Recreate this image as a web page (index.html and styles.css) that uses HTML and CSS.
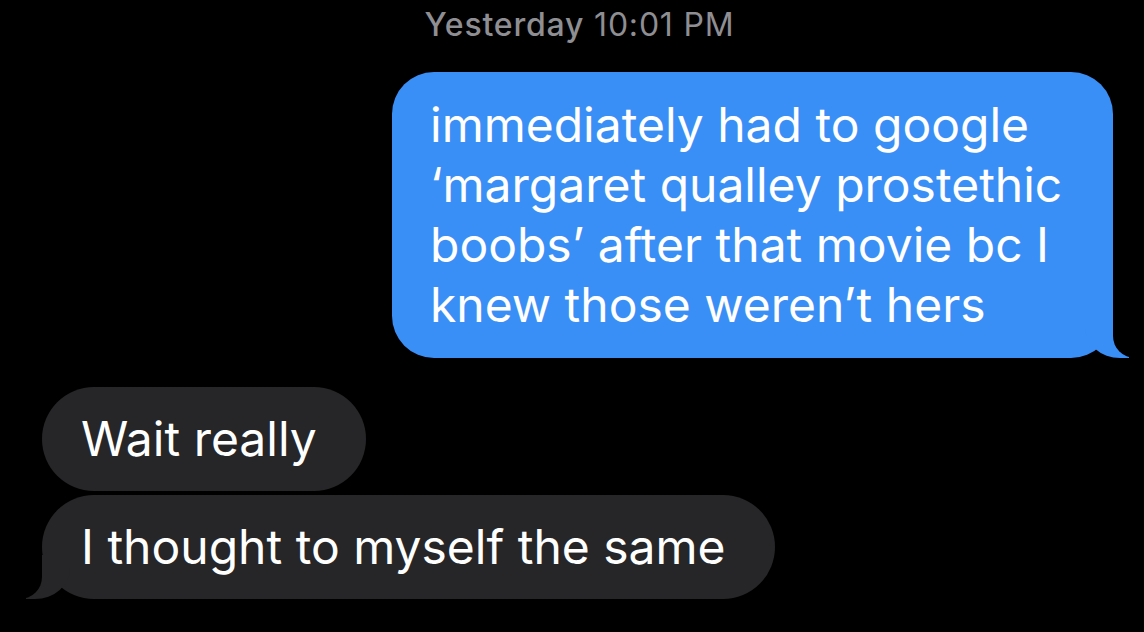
FILE: index.html
```html
<!DOCTYPE html>
<html lang="en">
<head>
<meta charset="utf-8">
<title>Messages</title>
<link rel="stylesheet" href="styles.css">
</head>
<body>
<main class="thread">
  <div class="timestamp"><span class="day">Yesterday</span> 10:01 PM</div>
  <div class="row row-sent">
    <div class="bubble sent tail">immediately had to google ‘margaret qualley prostethic boobs’ after that movie bc I knew those weren’t hers</div>
  </div>
  <div class="group-received">
    <div class="row row-received">
      <div class="bubble received">Wait really</div>
    </div>
    <div class="row row-received">
      <div class="bubble received tail">I thought to myself the same</div>
    </div>
  </div>
</main>
</body>
</html>
```

FILE: styles.css
```css
html, body {
  margin: 0;
  padding: 0;
  background: #000;
}

body {
  width: 1144px;
  height: 632px;
  overflow: hidden;
  font-family: Inter, "Liberation Sans", sans-serif;
  color: #fff;
}

.thread {
  display: flex;
  flex-direction: column;
  padding: 5px 31px 0 42px;
}

.timestamp {
  align-self: center;
  margin-left: 4px;
  font-size: 32px;
  line-height: 40px;
  letter-spacing: 0.8px;
  color: #8e8e93;
  font-weight: 400;
}

.timestamp .day {
  font-weight: 500;
}

.row {
  display: flex;
}

.row-sent {
  justify-content: flex-end;
  margin-top: 27px;
}

.group-received {
  display: flex;
  flex-direction: column;
  gap: 4px;
  margin-top: 29px;
}

.row-received {
  justify-content: flex-start;
}

.bubble {
  position: relative;
  font-size: 48px;
  line-height: 60px;
  letter-spacing: 0;
  box-sizing: border-box;
}

.sent {
  background: #3a8ff6;
  width: 721px;
  padding: 23px 32px 23px 38px;
  border-radius: 42px;
}

.received {
  background: #262628;
  padding: 22px 49px 22px 39px;
  border-radius: 52px;
}

.tail::before,
.tail::after {
  content: "";
  position: absolute;
  bottom: 0;
  height: 44px;
}

.sent.tail::before {
  right: -16px;
  width: 44px;
  background: #3a8ff6;
  border-bottom-left-radius: 35px 31px;
}

.sent.tail::after {
  right: -58px;
  width: 58px;
  background: #000;
  border-bottom-left-radius: 22px;
}

.received.tail::before {
  left: -16px;
  width: 44px;
  background: #262628;
  border-bottom-right-radius: 35px 31px;
}

.received.tail::after {
  left: -58px;
  width: 58px;
  background: #000;
  border-bottom-right-radius: 22px;
}
```
